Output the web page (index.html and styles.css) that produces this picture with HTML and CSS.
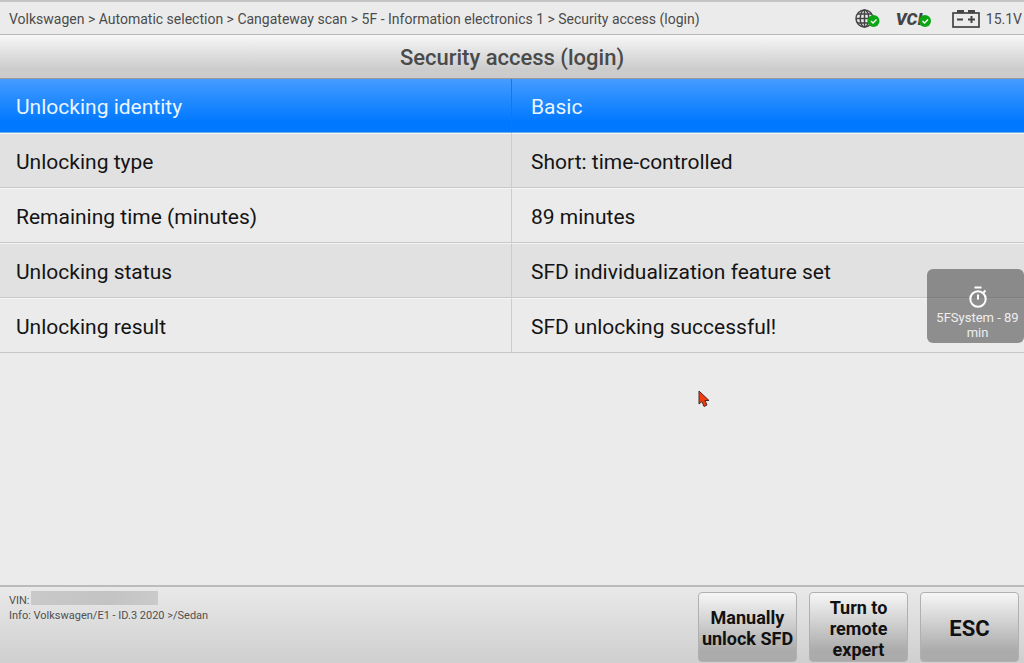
FILE: index.html
```html
<!DOCTYPE html>
<html lang="en">
<head>
	<meta charset="utf-8">
	<title>Security access (login)</title>
	<link rel="stylesheet" href="styles.css">
</head>
<body>
<div class="screen">
	<header class="topbar">
		<div class="path">Volkswagen &gt; Automatic selection &gt; Cangateway scan &gt; 5F - Information electronics 1 &gt; Security access (login)</div>
		<div class="status">
			<svg class="globe" width="25" height="20" viewBox="0 0 25 20">
				<g fill="none" stroke="#444" stroke-width="1.5">
					<circle cx="9.5" cy="9.5" r="8.5"/>
					<ellipse cx="9.5" cy="9.5" rx="4.3" ry="8.5"/>
					<path d="M9.5 1v17M1 9.5h17M2.5 5h14M2.5 14h14"/>
				</g>
				<circle cx="18.5" cy="12" r="6" fill="#0ca514"/>
				<path d="M16 12l2 2 3.500-3.500" fill="none" stroke="#fff" stroke-width="1.400"/>
			</svg>
			<div class="vci">VCI
				<svg class="vci-ok" width="12" height="12" viewBox="0 0 12 12">
					<circle cx="6" cy="6" r="6" fill="#0ca514"/>
					<path d="M3.500 6l2 2L9 4.500" fill="none" stroke="#fff" stroke-width="1.400"/>
				</svg>
			</div>
			<div class="volt">
				<svg width="28" height="18" viewBox="0 0 28 18">
					<rect x="1" y="3" width="26" height="14" fill="none" stroke="#444" stroke-width="1.700"/>
					<path d="M5 0h7v3H5zM16 0h7v3h-7z" fill="#444"/>
					<path d="M5 9.500h6M16 9.500h7M19.500 6v7" stroke="#444" stroke-width="2"/>
				</svg>
				<span>15.1V</span>
			</div>
		</div>
	</header>
	<h1 class="title">Security access (login)</h1>
	<main class="main">
		<table class="list">
			<tr class="active"><th scope="row">Unlocking identity</th><td>Basic</td></tr>
			<tr><th scope="row">Unlocking type</th><td>Short: time-controlled</td></tr>
			<tr><th scope="row">Remaining time (minutes)</th><td>89 minutes</td></tr>
			<tr><th scope="row">Unlocking status</th><td>SFD individualization feature set</td></tr>
			<tr><th scope="row">Unlocking result</th><td>SFD unlocking successful!</td></tr>
		</table>
		<div class="timer">
			<svg width="20" height="22" viewBox="0 0 20 22" fill="none" stroke="#fff">
				<circle cx="10" cy="13" r="7.700" stroke-width="2"/>
				<path d="M6.500 1.500h7M10 8.500v5M15.500 6.500l2-2" stroke-width="2"/>
			</svg>
			<p>5FSystem - 89 min</p>
		</div>
		<svg class="pointer" width="12" height="18" viewBox="0 0 12 18">
			<path d="M1 1v13l3-2.500 2 5 3-1.500-2-4.500h4z" fill="#f03c10" stroke="#4a2a24" stroke-width="1"/>
		</svg>
	</main>
	<footer class="footer">
		<div class="car">
			<div class="vin">VIN:<span class="mask"></span></div>
			<div>Info: Volkswagen/E1 - ID.3 2020 &gt;/Sedan</div>
		</div>
		<div class="btns">
			<button type="button" class="btn">Manually unlock SFD</button>
			<button type="button" class="btn">Turn to remote expert</button>
			<button type="button" class="btn esc">ESC</button>
		</div>
	</footer>
</div>
</body>
</html>
```
FILE: styles.css
```css
*{
	padding: 0;
	margin: 0;
	box-sizing: border-box;
}
body{
	font-family: Roboto, "Liberation Sans", sans-serif;
	background: #ebebeb;
	color: #141414;
}
.screen{
	display: flex;
	flex-direction: column;
	min-height: 100vh;
	overflow: hidden;
}
.topbar{
	display: flex;
	justify-content: space-between;
	align-items: center;
	height: 35px;
	padding: 2px 2px 0 9px;
	border-top: 2px solid #c4c4c4;
	border-bottom: 1px solid #b8b8b8;
	color: #4c4c4c;
	font-size: 14px;
}
.status{
	display: flex;
	align-items: center;
	gap: 16px;
}
.globe{
	display: block;
}
.vci{
	position: relative;
	width: 36px;
	color: #444;
	font-size: 17px;
	font-weight: 900;
	font-style: italic;
}
.vci-ok{
	position: absolute;
	right: 1px;
	bottom: 2px;
}
.volt{
	display: flex;
	align-items: center;
	gap: 6px;
	margin-left: 4px;
}
.title{
	height: 44px;
	padding-top: 2px;
	line-height: 42px;
	border-bottom: 1px solid #999;
	background: linear-gradient(#f7f7f7, #cccccc 80%);
	color: #4a4a4a;
	font-size: 22px;
	font-weight: 500;
	text-align: center;
}
.main{
	position: relative;
	flex: 1;
}
.list{
	width: 100%;
	table-layout: fixed;
	border-spacing: 0;
	font-size: 21px;
}
.list th,
.list td{
	height: 55px;
	padding: 3px 19px 0;
	border-top: 1px solid #f5f5f5;
	border-bottom: 1px solid #c8c8c8;
	font-weight: 400;
	text-align: left;
}
.list th{
	padding: 3px 16px 0;
	border-right: 1px solid #ccc;
}
.list tr:nth-child(even){
	background: #e1e1e1;
}
.list .active{
	background: linear-gradient(#459cff, #0078ff 80%);
	color: #e9f5ff;
}
.list .active th,
.list .active td{
	height: 54px;
	border-top: 0;
	border-bottom-color: #6faeea;
}
.list .active th{
	border-right-color: #1478e6;
}
.timer{
	position: absolute;
	top: 190px;
	right: 0;
	width: 97px;
	height: 74px;
	padding: 17px 0 0 4px;
	border-radius: 6px;
	background: rgba(80, 80, 80, .6);
	color: #eee;
	font-size: 13px;
	line-height: 15px;
	text-align: center;
}
.timer svg{
	display: block;
	margin: 0 auto 2px;
}
.pointer{
	position: absolute;
	top: 311px;
	left: 68.2%;
}
.footer{
	display: flex;
	justify-content: space-between;
	padding: 5px 5px 1px 9px;
	border-top: 2px solid #bbb;
	background: linear-gradient(#e9e9e9, #cfcfcf);
}
.car{
	color: #505050;
	font-size: 11px;
	line-height: 15px;
}
.vin{
	display: flex;
	align-items: center;
	height: 16px;
}
.mask{
	width: 127px;
	height: 14px;
	margin: 0 0 5px 1px;
	background: linear-gradient(90deg, #c9c9c9, #c3c3c3 60%, #cacaca);
}
.btns{
	display: flex;
	gap: 12px;
}
.btn{
	width: 99px;
	height: 70px;
	padding-top: 2px;
	border: 1px solid #b0b0b0;
	border-radius: 4px;
	background: linear-gradient(#f6f6f6, #cfcfcf 45%, #ababab 85%);
	color: #111;
	font-family: inherit;
	font-size: 18px;
	font-weight: 700;
	line-height: 21px;
}
.esc{
	font-size: 22px;
}
```
